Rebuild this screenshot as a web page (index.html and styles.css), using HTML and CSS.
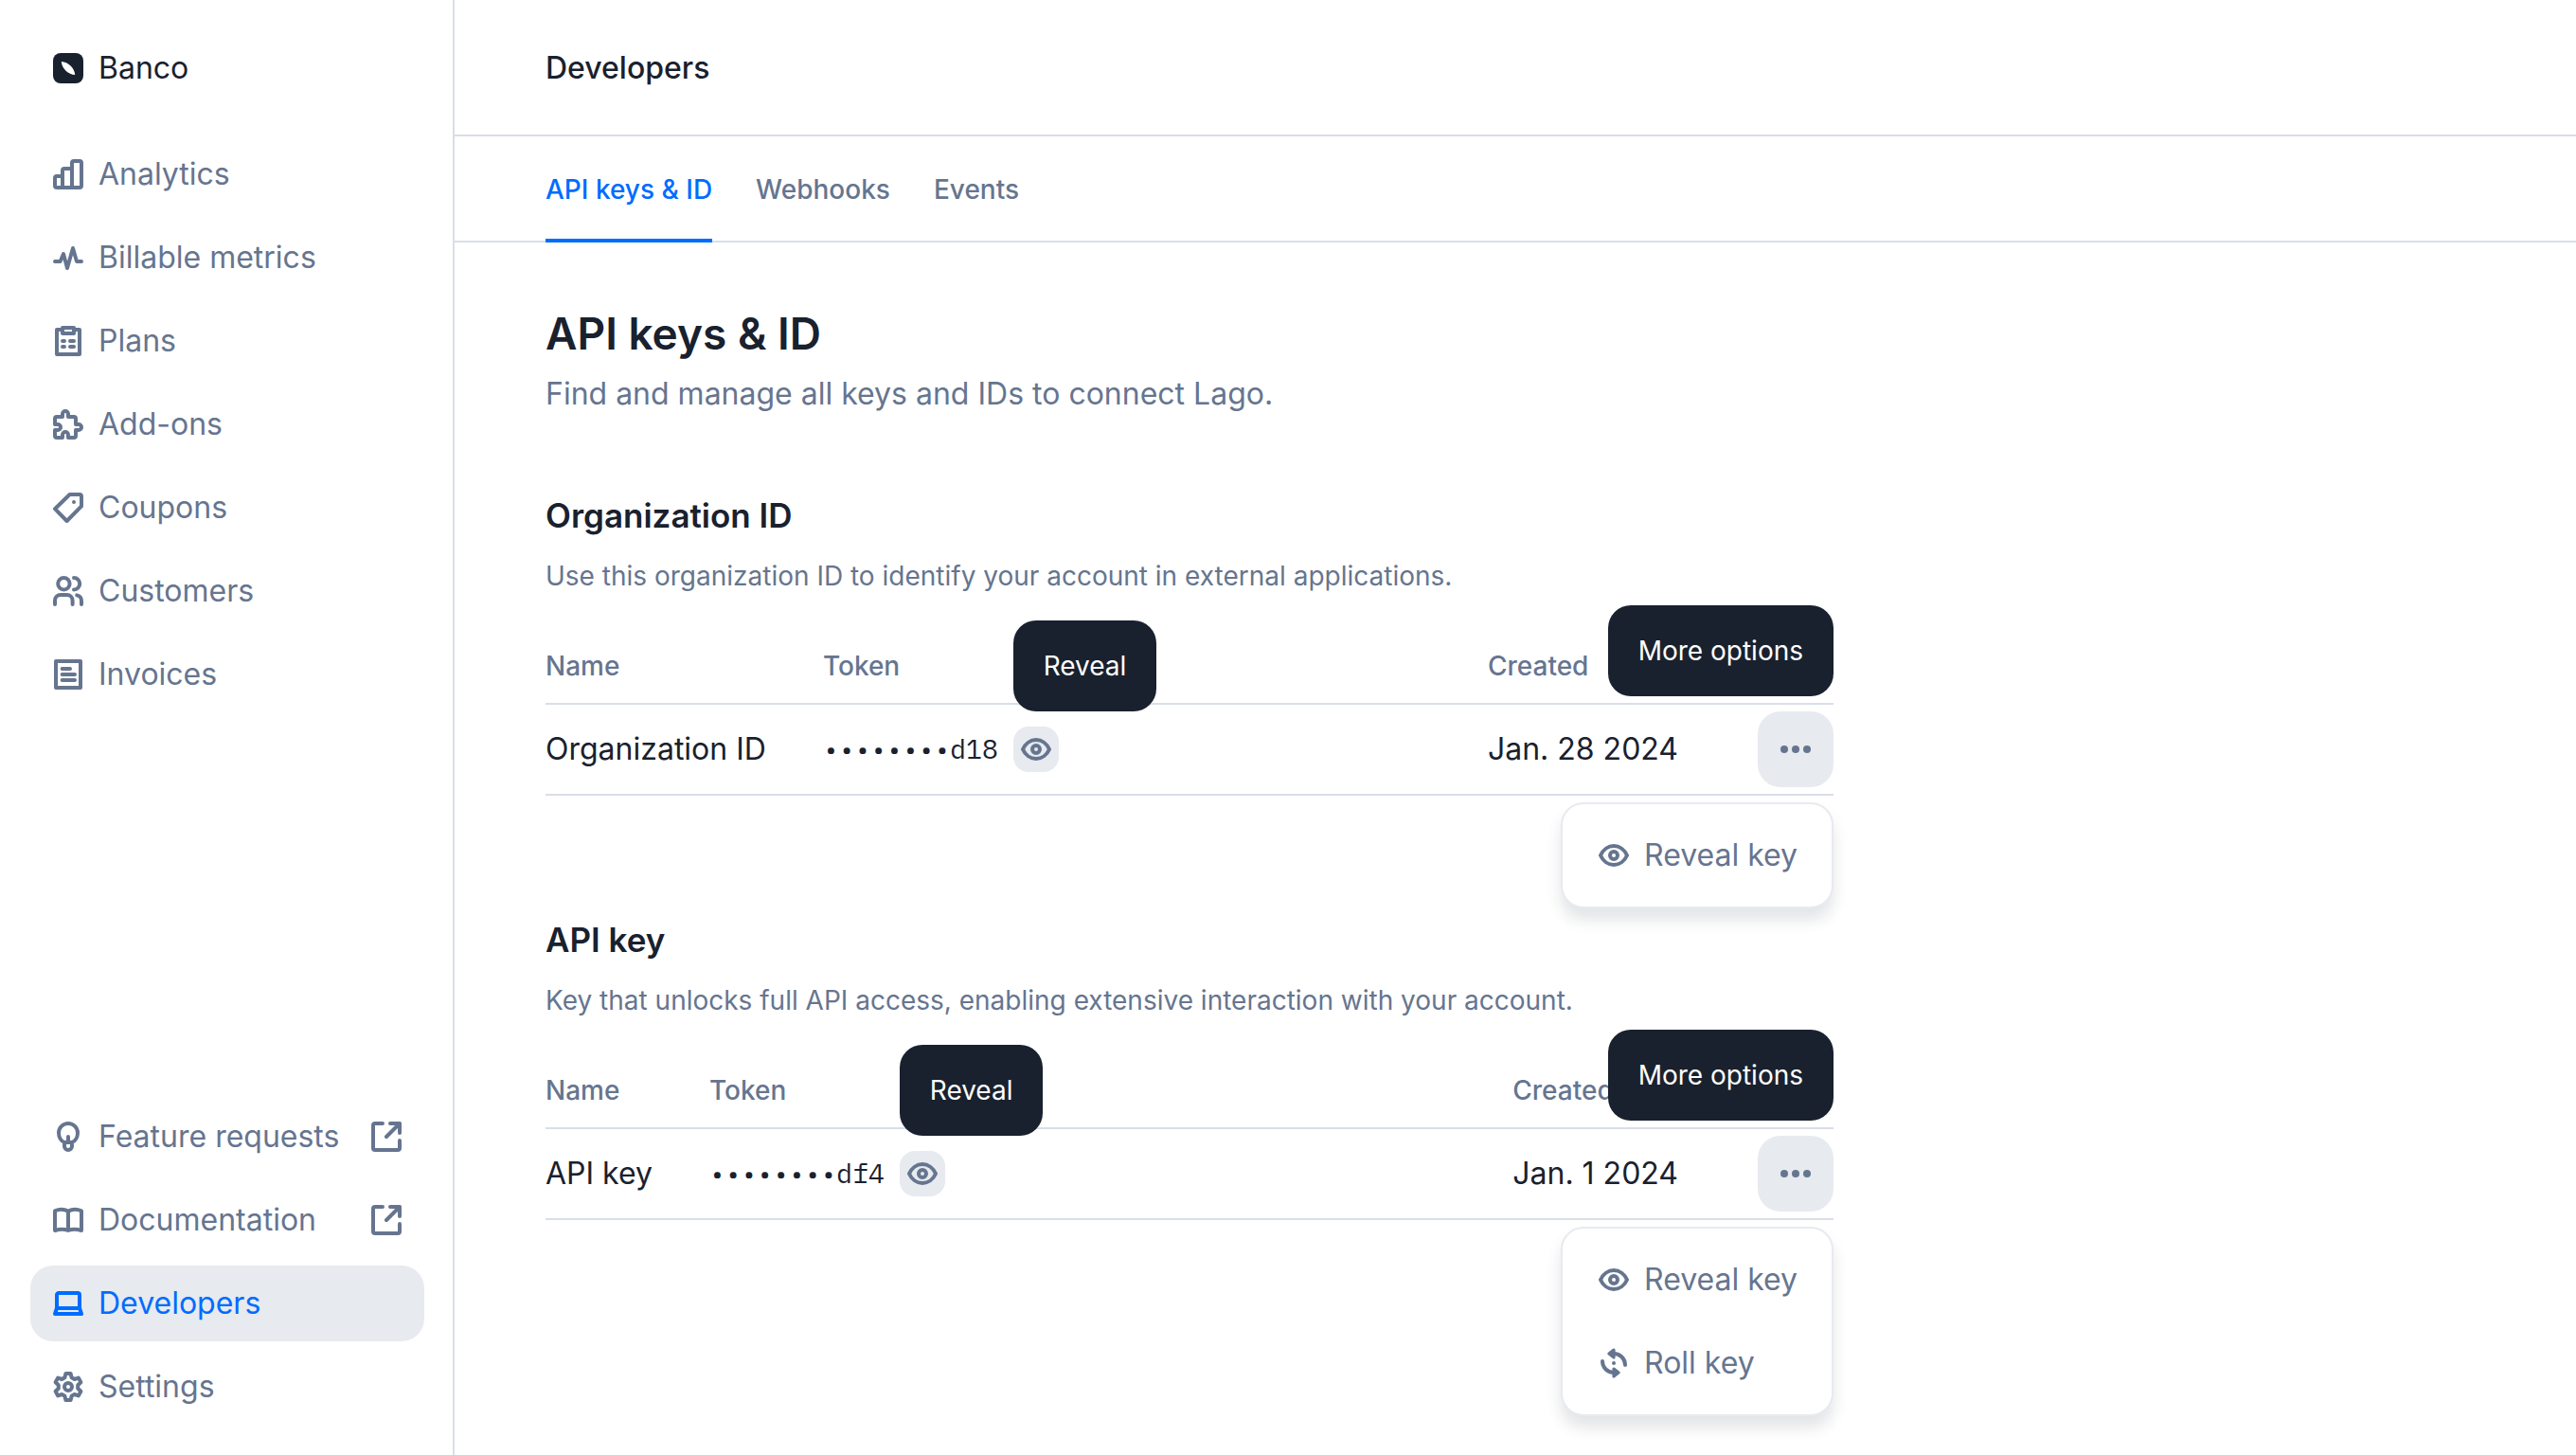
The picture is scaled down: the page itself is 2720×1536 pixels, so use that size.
FILE: index.html
```html
<!DOCTYPE html>
<html lang="en">
<head>
<meta charset="utf-8">
<meta name="viewport" content="width=device-width, initial-scale=1">
<title>Developers - Banco</title>
<link rel="stylesheet" href="styles.css">
</head>
<body>
<svg class="sprite" aria-hidden="true">
  <symbol id="i-logo" viewBox="0 0 16 16"><rect width="16" height="16" rx="4" fill="#19212e" stroke="none"/><path d="M4.4 4.5C8 4.7 11.4 8 11.6 11.5 8.200 11.500 4.500 8 4.400 4.500z" fill="#fff" stroke="none"/></symbol>
  <symbol id="i-analytics" viewBox="0 0 16 16"><path d="M10 15V2a1 1 0 0 1 1-1h3a1 1 0 0 1 1 1v12a1 1 0 0 1-1 1H2a1 1 0 0 1-1-1v-4a1 1 0 0 1 1-1h3M5 15V6a1 1 0 0 1 1-1h4"/></symbol>
  <symbol id="i-pulse" viewBox="0 0 16 16"><path d="M1 10h2.800L5.500 6l2 7.500 3-10.500 2 7H15"/></symbol>
  <symbol id="i-plans" viewBox="0 0 16 16"><path d="M5 2H2v13h12V2h-3M5 1h6v3H5zM5 8h1M9 8h2M5 11h1M9 11h2"/></symbol>
  <symbol id="i-puzzle" viewBox="0 0 16 16"><path d="M2 4h3V2.500a1.500 1.500 0 0 1 3 0V4h3a1 1 0 0 1 1 1v3h1.500a1.500 1.500 0 0 1 0 3H12v3a1 1 0 0 1-1 1H8v-1.500a1.500 1.500 0 0 0-3 0V15H2a1 1 0 0 1-1-1v-3h1.500a1.500 1.500 0 0 0 0-3H1V5a1 1 0 0 1 1-1z"/></symbol>
  <symbol id="i-coupon" viewBox="0 0 16 16"><path d="M8.800 1H14a1 1 0 0 1 1 1v5.200L7.300 15 1 8.600z"/><circle cx="11" cy="5" r="1" fill="currentColor" stroke="none"/></symbol>
  <symbol id="i-customers" viewBox="0 0 16 16"><circle cx="5.700" cy="4.100" r="3.100"/><path d="M11 1a3.100 3.100 0 0 1 0 6.200M1 15v-2a3 3 0 0 1 3-3h3.300a3 3 0 0 1 3 3v2M12.600 10.200A3 3 0 0 1 15 13v2"/></symbol>
  <symbol id="i-invoice" viewBox="0 0 16 16"><path d="M1.500 1h13v14h-13zM4.800 5H9M4.800 8h6.700M4.800 11h6.700"/></symbol>
  <symbol id="i-bulb" viewBox="0 0 16 16"><path d="M6 11C4.300 10.300 3 8.300 3 6a5 5 0 0 1 10 0c0 2.300-1.300 4.300-3 5v2a2 2 0 0 1-4 0zM8 8v3M6 11h4"/></symbol>
  <symbol id="i-book" viewBox="0 0 16 16"><path d="M1 13.500V3.200C3 2.300 6 2.300 8 3.300c2-1 5-1 7-.1v10.300c-2.500-.8-5-.8-7 0-2-.8-4.500-.8-7 0zM8 3.300v10.200"/></symbol>
  <symbol id="i-laptop" viewBox="0 0 16 16"><path d="M2 10.500v-7a1 1 0 0 1 1-1h10a1 1 0 0 1 1 1v7M2 10.500h12l1 3H1z"/></symbol>
  <symbol id="i-gear" viewBox="0 0 16 16"><path d="M6.700 1h2.600l.5 2.100 1.500.9 2.100-.7 1.300 2.300-1.600 1.500v1.800l1.600 1.500-1.300 2.300-2.100-.7-1.500.9-.5 2.100H6.700l-.5-2.100-1.500-.9-2.100.7-1.300-2.300 1.600-1.500V7.100L1.300 5.600l1.300-2.300 2.100.7 1.500-.9z"/><circle cx="8" cy="8" r="2"/></symbol>
  <symbol id="i-external" viewBox="0 0 16 16"><path d="M6 1H2a1 1 0 0 0-1 1v12a1 1 0 0 0 1 1h12a1 1 0 0 0 1-1v-4M10 1h5v5M15 1L8 8"/></symbol>
  <symbol id="i-eye" viewBox="0 0 16 16"><path d="M1 8c1.300-3 4-5 7-5s5.700 2 7 5c-1.300 3-4 5-7 5S2.300 11 1 8z"/><circle cx="8" cy="8" r="2"/></symbol>
  <symbol id="i-roll" viewBox="0 0 16 16"><path d="M7 3h1a6 6 0 0 1 6 6M9 13H8a6 6 0 0 1-6-6"/><path d="M8 1L5.500 3 8 5zM8 11l2.500 2L8 15z" fill="currentColor" stroke-width="1.600"/><circle cx="8" cy="8" r="1" fill="currentColor" stroke="none"/></symbol>
  <symbol id="i-dots" viewBox="0 0 16 16"><g fill="currentColor" stroke="none"><circle cx="2" cy="8" r="2"/><circle cx="8" cy="8" r="2"/><circle cx="14" cy="8" r="2"/></g></symbol>
</svg>

<div class="app">
  <aside class="sidebar">
    <button class="nav-item brand" type="button"><svg class="icon"><use href="#i-logo"/></svg>Banco</button>
    <nav class="nav" aria-label="Main">
      <a class="nav-item" href="#analytics"><svg class="icon"><use href="#i-analytics"/></svg>Analytics</a>
      <a class="nav-item" href="#metrics"><svg class="icon"><use href="#i-pulse"/></svg>Billable metrics</a>
      <a class="nav-item" href="#plans"><svg class="icon"><use href="#i-plans"/></svg>Plans</a>
      <a class="nav-item" href="#add-ons"><svg class="icon"><use href="#i-puzzle"/></svg>Add-ons</a>
      <a class="nav-item" href="#coupons"><svg class="icon"><use href="#i-coupon"/></svg>Coupons</a>
      <a class="nav-item" href="#customers"><svg class="icon"><use href="#i-customers"/></svg>Customers</a>
      <a class="nav-item" href="#invoices"><svg class="icon"><use href="#i-invoice"/></svg>Invoices</a>
    </nav>
    <nav class="nav nav-bottom" aria-label="Secondary">
      <a class="nav-item" href="#requests"><svg class="icon"><use href="#i-bulb"/></svg>Feature requests<svg class="icon icon-end"><use href="#i-external"/></svg></a>
      <a class="nav-item" href="#docs"><svg class="icon"><use href="#i-book"/></svg>Documentation<svg class="icon icon-end"><use href="#i-external"/></svg></a>
      <a class="nav-item active" href="#developers" aria-current="page"><svg class="icon"><use href="#i-laptop"/></svg>Developers</a>
      <a class="nav-item" href="#settings"><svg class="icon"><use href="#i-gear"/></svg>Settings</a>
    </nav>
  </aside>

  <main class="main">
    <header class="topbar">Developers</header>
    <nav class="tabs" aria-label="Developers">
      <a class="tab selected" href="#keys" aria-current="page">API keys &amp; ID</a>
      <a class="tab" href="#webhooks">Webhooks</a>
      <a class="tab" href="#events">Events</a>
    </nav>

    <div class="content">
      <div class="intro">
        <h1>API keys &amp; ID</h1>
        <p>Find and manage all keys and IDs to connect Lago.</p>
      </div>

      <section class="section">
        <h2>Organization ID</h2>
        <p>Use this organization ID to identify your account in external applications.</p>
        <table class="keys">
          <thead><tr><th>Name</th><th class="grow">Token</th><th>Created</th><td></td></tr></thead>
          <tbody><tr>
            <td>Organization ID</td>
            <td class="grow"><div class="token"><code>••••••••d18</code>
              <span class="anchor"><button class="reveal" type="button" aria-label="Reveal"><svg class="icon"><use href="#i-eye"/></svg></button><span class="tooltip tip-left" role="tooltip">Reveal</span></span></div></td>
            <td>Jan. 28 2024</td>
            <td class="actions"><div class="anchor">
              <button class="more" type="button" aria-label="More options"><svg class="icon"><use href="#i-dots"/></svg></button>
              <span class="tooltip tip-right" role="tooltip">More options</span>
              <div class="menu">
                <button class="menu-item" type="button"><svg class="icon"><use href="#i-eye"/></svg>Reveal key</button>
              </div>
            </div></td>
          </tr></tbody>
        </table>
      </section>

      <section class="section">
        <h2>API key</h2>
        <p>Key that unlocks full API access, enabling extensive interaction with your account.</p>
        <table class="keys">
          <thead><tr><th>Name</th><th class="grow">Token</th><th>Created</th><td></td></tr></thead>
          <tbody><tr>
            <td>API key</td>
            <td class="grow"><div class="token"><code>••••••••df4</code>
              <span class="anchor"><button class="reveal" type="button" aria-label="Reveal"><svg class="icon"><use href="#i-eye"/></svg></button><span class="tooltip tip-left" role="tooltip">Reveal</span></span></div></td>
            <td>Jan. 1 2024</td>
            <td class="actions"><div class="anchor">
              <button class="more" type="button" aria-label="More options"><svg class="icon"><use href="#i-dots"/></svg></button>
              <span class="tooltip tip-right" role="tooltip">More options</span>
              <div class="menu">
                <button class="menu-item" type="button"><svg class="icon"><use href="#i-eye"/></svg>Reveal key</button>
                <button class="menu-item" type="button"><svg class="icon"><use href="#i-roll"/></svg>Roll key</button>
              </div>
            </div></td>
          </tr></tbody>
        </table>
      </section>
    </div>
  </main>
</div>
</body>
</html>
```
FILE: styles.css
```css
:root {
  --ink: #19212e;
  --muted: #66758f;
  --line: #d9dee7;
  --fill: #e7eaef;
  --blue: #006cff;
}

* { box-sizing: border-box; }

body {
  margin: 0;
  background: #fff;
  color: var(--ink);
  font: 400 32px/48px Inter, "Liberation Sans", sans-serif;
}

button {
  border: 0;
  padding: 0;
  background: none;
  color: inherit;
  font: inherit;
  cursor: pointer;
}

a { color: inherit; text-decoration: none; }
h1, h2, p { margin: 0; }

.sprite { position: absolute; width: 0; height: 0; }

.icon {
  flex: none;
  display: block;
  width: 32px;
  height: 32px;
  fill: none;
  stroke: currentColor;
  stroke-width: 2;
  stroke-linecap: round;
  stroke-linejoin: round;
}
.icon-end { margin-left: auto; }

.app { display: flex; min-height: 100vh; }

/* Sidebar */
.sidebar {
  flex: none;
  display: flex;
  flex-direction: column;
  gap: 32px;
  width: 480px;
  padding: 32px 30px 32px 32px;
  border-right: 2px solid var(--line);
}
.nav { display: flex; flex-direction: column; gap: 8px; }
.nav-bottom { margin-top: auto; }
.nav-item {
  display: flex;
  align-items: center;
  gap: 16px;
  padding: 16px 24px;
  border-radius: 24px;
  color: var(--muted);
  white-space: nowrap;
}
.brand { color: var(--ink); }
.active { background: var(--fill); color: var(--blue); }

/* Header and tabs */
.main { flex: 1; min-width: 0; }
.topbar {
  padding: 48px 96px;
  box-shadow: inset 0 -2px var(--line);
  font-weight: 500;
}
.tabs {
  display: flex;
  gap: 46px;
  padding: 0 96px;
  box-shadow: inset 0 -2px var(--line);
  color: var(--muted);
  font-size: 28px;
  font-weight: 500;
  line-height: 40px;
}
.tab { padding: 36px 0; }
.selected { color: var(--blue); box-shadow: inset 0 -4px var(--blue); }

/* Content */
.content { max-width: 1552px; padding: 64px 96px 0; }
.intro { margin-bottom: 80px; }
.intro p { margin-top: 8px; color: var(--muted); }
h1 { font-size: 46px; font-weight: 600; line-height: 64px; }
h2 { font-size: 35px; font-weight: 600; line-height: 48px; }
.section { margin-bottom: 128px; }
.section:last-child { margin-bottom: 0; }
.section > p {
  margin: 20px 0 36px;
  color: var(--muted);
  font-size: 28px;
  line-height: 40px;
}

/* Key tables */
.keys {
  width: 100%;
  border-collapse: separate;
  border-spacing: 0;
  white-space: nowrap;
}
.keys th, .keys td {
  height: 96px;
  padding: 0 60px 0 0;
  border-bottom: 2px solid var(--line);
  text-align: left;
}
.keys thead th, .keys thead td {
  height: 80px;
  color: var(--muted);
  font-size: 28px;
  font-weight: 500;
  line-height: 40px;
}
.keys .grow { width: 100%; }
.keys .actions { padding: 0 0 0 24px; }

.token { display: flex; align-items: center; gap: 16px; }
.token code { font: 28px/40px "IBM Plex Mono", "Liberation Mono", monospace; }

.anchor { display: block; position: relative; }
.reveal, .more {
  display: flex;
  align-items: center;
  justify-content: center;
  background: var(--fill);
  color: var(--muted);
}
.reveal { width: 48px; height: 48px; border-radius: 16px; }
.more { width: 80px; height: 80px; border-radius: 24px; }

.tooltip {
  position: absolute;
  bottom: calc(100% + 16px);
  z-index: 1;
  padding: 28px 32px;
  border-radius: 24px;
  background: var(--ink);
  color: #fff;
  font-size: 28px;
  line-height: 40px;
}
.tip-left { left: 0; }
.tip-right { right: 0; }

.menu {
  position: absolute;
  top: calc(100% + 16px);
  right: 0;
  z-index: 1;
  display: flex;
  flex-direction: column;
  gap: 8px;
  min-width: 288px;
  padding: 14px;
  border: 2px solid var(--fill);
  border-radius: 24px;
  background: #fff;
  box-shadow: 0 12px 16px rgba(25, 33, 46, 0.12);
}
.menu-item {
  display: flex;
  align-items: center;
  gap: 16px;
  padding: 16px 20px 16px 24px;
  border-radius: 24px;
  color: var(--muted);
}
```
